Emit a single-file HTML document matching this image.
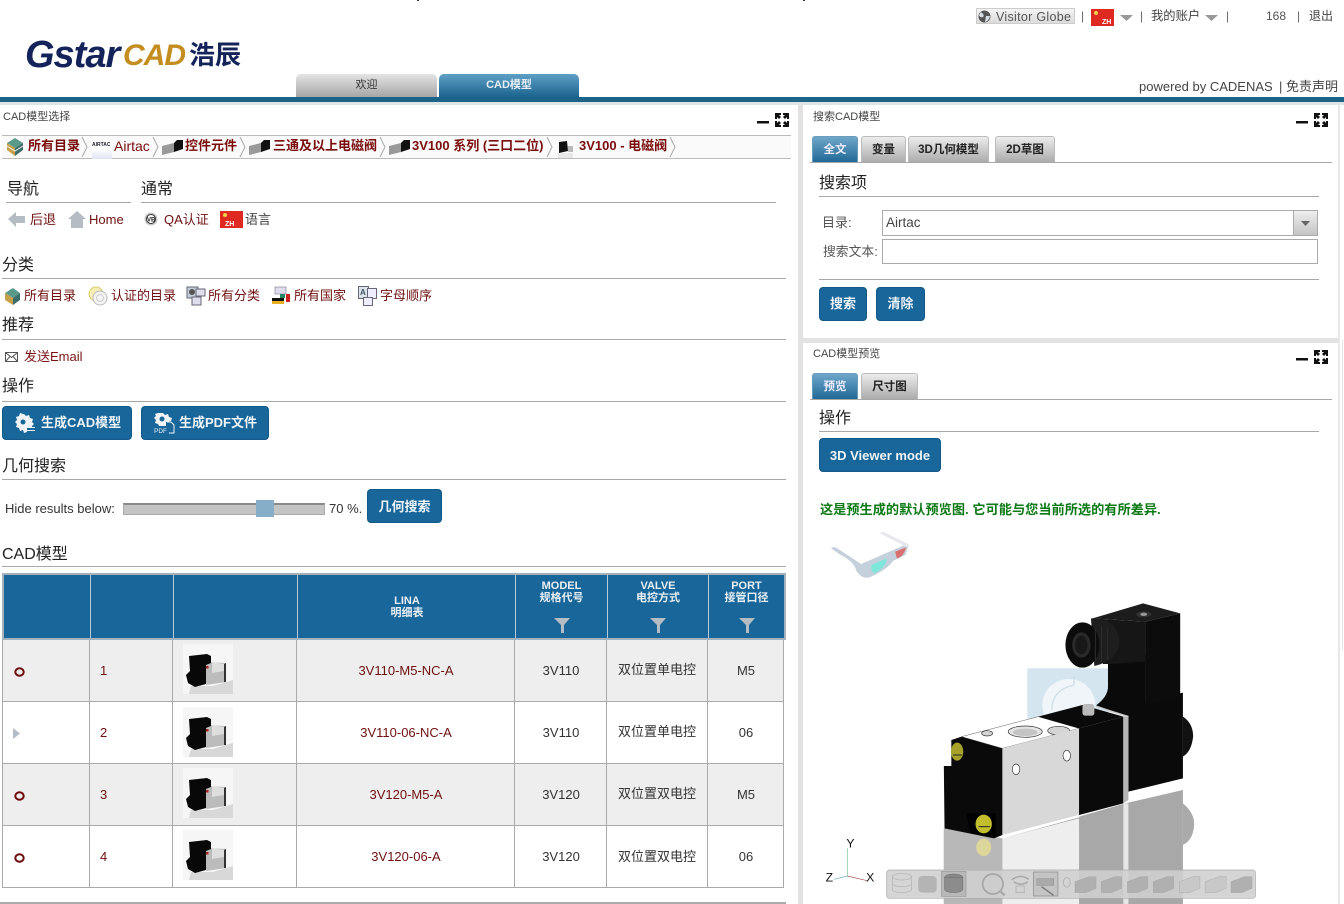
<!DOCTYPE html>
<html lang="zh"><head><meta charset="utf-8"><title>CAD</title>
<style>
html,body{margin:0;padding:0;background:#fff}
#p{position:relative;width:1344px;height:904px;overflow:hidden;background:#fff;font-family:"Liberation Sans","Noto Sans CJK SC",sans-serif;font-size:13px;color:#333}
.a,.t,.h,.l,.b,.c{position:absolute}
.t{white-space:nowrap;line-height:16px;font-size:13px}
.s{font-size:12px}
.h{font-family:"Liberation Sans","WenQuanYi Zen Hei",sans-serif;font-size:16px;color:#222;line-height:20px;white-space:nowrap}
.l{height:1px;background:#a8a8a8}
.r{color:#6e1010}
.bc{color:#7a0c0c;font-weight:bold;font-size:13px}
.b{background:#19669a;border:1px solid #145a88;border-radius:4px;color:#eef4f8;font-weight:bold;font-size:13px;text-align:center;box-sizing:border-box;white-space:nowrap}
.tab{position:absolute;box-sizing:border-box;border-radius:3px 3px 0 0;text-align:center;font-size:11.500px;font-weight:bold;color:#222;line-height:26px;height:27px;background:linear-gradient(#ececec,#a9a9a9);border:1px solid #bbb;border-bottom:0;white-space:nowrap}
.tab.on{background:linear-gradient(#6fa6c9,#1d6695);color:#eef;border-color:#6a9cbd}
.c{font-size:13px;text-align:center;white-space:nowrap;line-height:16px}
.hd{position:absolute;color:#e8f0f5;font-weight:bold;font-size:11px;line-height:12px;text-align:center;white-space:nowrap}
svg{position:absolute;display:block}
</style></head><body><div id="p">

<svg width="0" height="0" style="left:0;top:0"><defs>
<g id="th">
<rect width="50" height="50" fill="#f6f6f6"/>
<path d="M6 50 L8 42 L30 42 L50 36 L50 50Z" fill="#d8d8d8"/>
<path d="M23 18 L43 19 L43 38 L23 41Z" fill="#bcbcbc"/>
<path d="M29 18 L41 20 L41 27 L29 29Z" fill="#dedede"/>
<path d="M41 20 L43 19 L43 38 L41 38Z" fill="#333"/>
<path d="M6 12 L24 10 L28 12 L28 19 L23 21 L23 40 L12 43 L5 39 L3 31 L7 27Z" fill="#080808"/>
<rect x="23" y="22" width="2.500" height="2.500" fill="#a22"/>
</g>
<g id="win">
<rect x="0" y="8" width="12" height="2.500" fill="#111"/>
<g fill="#111">
<path d="M18 0h6v2h-2l2 2-2 2-2-2v2h-2z"/>
<path d="M32 0h-6v2h2l-2 2 2 2 2-2v2h2z"/>
<path d="M18 14h6v-2h-2l2-2-2-2-2 2V8h-2z"/>
<path d="M32 14h-6v-2h2l-2-2 2-2 2 2V8h2z"/>
</g>
</g>
</defs></svg>

<!-- top marks -->
<div class="a" style="left:417px;top:0;width:2px;height:1px;background:#333"></div>
<div class="a" style="left:803px;top:0;width:2px;height:1px;background:#333"></div>

<!-- top right bar -->
<div class="a" style="left:976px;top:8px;width:99px;height:16px;box-sizing:border-box;background:linear-gradient(#f4f4f4,#dcdcdc);border:1px solid #ccc"></div>
<svg style="left:978px;top:10px" width="13" height="13"><circle cx="6.500" cy="6.500" r="6" fill="#555"/><path d="M3 2 Q7 5 5 7 Q2 8 1 5Z M8 6 L12 6 Q11 11 7 12Z" fill="#d8dee4"/></svg>
<div class="t" style="left:996px;top:9px;font-size:12.500px;color:#555;letter-spacing:.3px">Visitor Globe</div>
<div class="t s" style="left:1081px;top:8px;color:#666">|</div>
<svg style="left:1091px;top:9px" width="23" height="17"><rect width="23" height="17" fill="#df2a22"/><circle cx="5" cy="4" r="2" fill="#f6d24a"/><text x="11" y="15" font-size="7" font-weight="bold" fill="#fff" font-family="Liberation Sans">ZH</text></svg>
<svg style="left:1120px;top:14px" width="13" height="8"><path d="M0 1H13L6.500 7Z" fill="#999"/></svg>
<div class="t s" style="left:1140px;top:8px;color:#666">|</div>
<div class="t" style="left:1151px;top:8px;color:#444;font-size:12.300px">我的账户</div>
<svg style="left:1205px;top:14px" width="13" height="8"><path d="M0 1H13L6.500 7Z" fill="#999"/></svg>
<div class="t s" style="left:1226px;top:8px;color:#666">|</div>
<div class="t s" style="left:1266px;top:8px;color:#555">168</div>
<div class="t s" style="left:1297px;top:8px;color:#666">|</div>
<div class="t s" style="left:1309px;top:8px;color:#444">退出</div>

<!-- logo -->
<div class="t" style="left:25px;top:37px;font-size:38px;line-height:36px;font-weight:bold;font-style:italic;color:#14245a;letter-spacing:-1px">Gstar</div>
<div class="t" style="left:123px;top:38px;font-size:30px;line-height:36px;font-weight:bold;font-style:italic;color:#c48d1f;letter-spacing:-1px">CAD</div>
<div class="t" style="left:189px;top:40px;font-size:26px;line-height:30px;font-weight:bold;color:#14245a;font-family:'Liberation Sans','Noto Sans CJK SC',sans-serif">浩辰</div>

<!-- main tabs -->
<div class="a" style="left:296px;top:74px;width:141px;height:23px;border-radius:5px 5px 0 0;background:linear-gradient(#e4e4e4,#a6a6a6);text-align:center;font-size:11px;line-height:23px;color:#333">欢迎</div>
<div class="a" style="left:439px;top:74px;width:140px;height:23px;border-radius:5px 5px 0 0;background:linear-gradient(#5e9fc6,#1b648f);text-align:center;font-size:11px;font-weight:bold;line-height:23px;color:#e6eff5">CAD模型</div>
<div class="t" style="left:1139px;top:79px;color:#444">powered by CADENAS</div>
<div class="t" style="left:1279px;top:79px;color:#444">| 免责声明</div>
<div class="a" style="left:0;top:97px;width:1344px;height:5px;background:#1b6388"></div>
<div class="a" style="left:0;top:102px;width:1344px;height:3px;background:#dfe5e4"></div>

<!-- panel gaps -->
<div class="a" style="left:798px;top:102px;width:5px;height:802px;background:#e2e2e2"></div>
<div class="a" style="left:803px;top:338px;width:535px;height:5px;background:#e2e2e2"></div>
<div class="a" style="left:1338px;top:105px;width:2px;height:799px;background:#e8e8e8"></div>
<div class="a" style="left:1342px;top:340px;width:1px;height:310px;background:#e4e4e4"></div>

<!-- LEFT PANEL -->
<div class="t" style="left:3px;top:109px;font-size:11px;color:#444">CAD模型选择</div>
<svg style="left:757px;top:113px;overflow:visible" width="34" height="14"><use href="#win"/></svg>

<div class="a" style="left:2px;top:135px;width:789px;height:24px;box-sizing:border-box;border:1px solid #bbb;border-width:1px 0;background:#fafafa"></div>
<svg style="left:6px;top:137px" width="18" height="20"><path d="M1 6L9 1L17 6L9 11Z" fill="#5a9a8a"/><path d="M1 6V13L9 19V11Z" fill="#c9a04a"/><path d="M17 6V13L9 19V11Z" fill="#3c6f6a"/><path d="M1 9L9 14L17 9" stroke="#eee" fill="none"/></svg>
<div class="t bc" style="left:28px;top:138px">所有目录</div>
<svg style="left:81px;top:136px" width="8" height="22"><path d="M1 1L6 11L1 21" fill="none" stroke="#aaa"/></svg>
<div class="a" style="left:92px;top:142px;width:20px;height:17px;background:linear-gradient(#fff 40%,#dfe4f2)"></div>
<div class="t" style="left:92px;top:141px;font-size:5px;line-height:8px;font-weight:bold;color:#223">AIRTAC</div>
<div class="t bc" style="left:114px;top:138px;font-weight:normal;font-size:14px">Airtac</div>
<svg style="left:152px;top:136px" width="8" height="22"><path d="M1 1L6 11L1 21" fill="none" stroke="#aaa"/></svg>
<svg style="left:162px;top:139px" width="21" height="16"><path d="M0 7L12 4V13L0 16Z" fill="#999"/><path d="M12 4L15 1H21V10L12 13Z" fill="#111"/></svg>
<div class="t bc" style="left:185px;top:138px">控件元件</div>
<svg style="left:239px;top:136px" width="8" height="22"><path d="M1 1L6 11L1 21" fill="none" stroke="#aaa"/></svg>
<svg style="left:249px;top:139px" width="21" height="16"><path d="M0 7L12 4V13L0 16Z" fill="#999"/><path d="M12 4L15 1H21V10L12 13Z" fill="#111"/></svg>
<div class="t bc" style="left:273px;top:138px">三通及以上电磁阀</div>
<svg style="left:379px;top:136px" width="8" height="22"><path d="M1 1L6 11L1 21" fill="none" stroke="#aaa"/></svg>
<svg style="left:389px;top:139px" width="21" height="16"><path d="M0 7L12 4V13L0 16Z" fill="#999"/><path d="M12 4L15 1H21V10L12 13Z" fill="#111"/></svg>
<div class="t bc" style="left:412px;top:138px">3V100 系列 (三口二位)</div>
<svg style="left:546px;top:136px" width="8" height="22"><path d="M1 1L6 11L1 21" fill="none" stroke="#aaa"/></svg>
<svg style="left:557px;top:141px" width="18" height="17"><path d="M2 1L10 0L11 10L2 12Z" fill="#111"/><path d="M11 5H16V11H11Z" fill="#bbb"/><rect x="1" y="12" width="15" height="5" fill="#e8e8e8"/></svg>
<div class="t bc" style="left:579px;top:138px">3V100 - 电磁阀</div>
<svg style="left:669px;top:136px" width="8" height="22"><path d="M1 1L6 11L1 21" fill="none" stroke="#aaa"/></svg>

<div class="h" style="left:7px;top:180px">导航</div>
<div class="h" style="left:141px;top:180px">通常</div>
<div class="l" style="left:6px;top:202px;width:125px"></div>
<div class="l" style="left:141px;top:202px;width:635px"></div>
<svg style="left:8px;top:211px" width="18" height="17"><path d="M0 8L8 1V5H17V12H8V16Z" fill="#b4bcc4"/></svg>
<div class="t r" style="left:30px;top:212px">后退</div>
<svg style="left:68px;top:211px" width="18" height="17"><path d="M9 0L18 8H15V17H3V8H0Z" fill="#b4bcc4"/></svg>
<div class="t r" style="left:89px;top:212px">Home</div>
<svg style="left:144px;top:212px" width="14" height="14"><circle cx="7" cy="7" r="6.500" fill="#c8c8c8"/><circle cx="7" cy="7" r="4.500" fill="#fff" stroke="#333"/><text x="3" y="9.500" font-size="6" font-weight="bold" fill="#222" font-family="Liberation Sans">VB</text></svg>
<div class="t r" style="left:164px;top:212px">QA认证</div>
<svg style="left:220px;top:211px" width="23" height="17"><rect width="23" height="17" fill="#df2a22"/><circle cx="5" cy="4" r="2" fill="#f6d24a"/><text x="5" y="15" font-size="7" font-weight="bold" fill="#fff" font-family="Liberation Sans">ZH</text></svg>
<div class="t" style="left:245px;top:212px;color:#444">语言</div>

<div class="h" style="left:2px;top:256px">分类</div>
<div class="l" style="left:2px;top:278px;width:784px"></div>
<svg style="left:4px;top:287px" width="17" height="19"><path d="M1 6L9 1L16 6L9 11Z" fill="#5a9a8a"/><path d="M1 6V13L9 18V11Z" fill="#c9a04a"/><path d="M16 6V13L9 18V11Z" fill="#3c6f6a"/></svg>
<div class="t r" style="left:24px;top:288px">所有目录</div>
<svg style="left:88px;top:286px" width="20" height="20"><circle cx="8" cy="8" r="7" fill="#f5efb5" stroke="#d8cf70"/><circle cx="12" cy="12" r="7" fill="#f4f4f4" stroke="#bbb"/><circle cx="12" cy="12" r="3.500" fill="none" stroke="#ccc"/></svg>
<div class="t r" style="left:111px;top:288px">认证的目录</div>
<svg style="left:186px;top:286px" width="20" height="20"><rect x="1" y="1" width="11" height="11" fill="#c2ced8" stroke="#667"/><rect x="10" y="3" width="9" height="7" fill="#dde" stroke="#667"/><rect x="6" y="11" width="9" height="8" fill="#dde" stroke="#667"/><circle cx="6" cy="6" r="3" fill="#555"/></svg>
<div class="t r" style="left:208px;top:288px">所有分类</div>
<svg style="left:272px;top:286px" width="19" height="19"><rect x="3" y="1" width="11" height="7" fill="#dde" stroke="#667" stroke-width=".5"/><rect x="0" y="12" width="12" height="3" fill="#111"/><rect x="0" y="15" width="12" height="3" fill="#e8b020"/><rect x="14" y="8" width="4" height="8" fill="#c22"/><rect x="8" y="8" width="5" height="4" fill="#286"/></svg>
<div class="t r" style="left:294px;top:288px">所有国家</div>
<svg style="left:358px;top:286px" width="19" height="20"><rect x=".5" y=".5" width="10" height="12" fill="#dbe4ea" stroke="#667"/><rect x="9.500" y="2.500" width="9" height="10" fill="#eef" stroke="#667"/><rect x="5.500" y="11.500" width="9" height="8" fill="#eef" stroke="#667"/><text x="2" y="9" font-size="8" font-weight="bold" fill="#456" font-family="Liberation Sans">A</text></svg>
<div class="t r" style="left:380px;top:288px">字母顺序</div>

<div class="h" style="left:2px;top:316px">推荐</div>
<div class="l" style="left:2px;top:339px;width:784px"></div>
<svg style="left:5px;top:352px" width="13" height="10"><rect x=".5" y=".5" width="12" height="9" fill="#fff" stroke="#555"/><path d="M.5 .5L6.500 5.500L12.500 .5M.5 9.500L5 4.500M12.500 9.500L8 4.500" fill="none" stroke="#555"/></svg>
<div class="t r" style="left:24px;top:349px;color:#7a1515">发送Email</div>

<div class="h" style="left:2px;top:377px">操作</div>
<div class="l" style="left:2px;top:401px;width:784px"></div>
<div class="b" style="left:2px;top:406px;width:130px;height:34px;line-height:31px;text-align:left;padding-left:38px">生成CAD模型</div>
<svg style="left:15px;top:413px" width="21" height="21"><path d="M9 1l2 2 3-1 1 3 3 1-1 3 2 2-2 2v2H12v4l-3 1-1-3-3 1-1-3-3-1 1-3-2-2 2-2-1-3 3-1 1-3 3 1z" fill="#f0f4f8"/><circle cx="8" cy="9" r="2.500" fill="#19669a"/><path d="M12 14h8v1h-8zM12 17h8v1h-8z" fill="#f0f4f8"/></svg>
<div class="b" style="left:141px;top:406px;width:128px;height:34px;line-height:31px;text-align:left;padding-left:37px">生成PDF文件</div>
<svg style="left:154px;top:413px" width="21" height="21"><path d="M9 0l2 2 3-1 1 3 3 1-1 3-5 1v4H5L4 11 1 10l1-3-2-2 2-2-1-2 3-1 1-2 3 1z" fill="#f0f4f8"/><circle cx="8" cy="6" r="2.500" fill="#19669a"/><path d="M13 9h4l3 3v8h-5" fill="none" stroke="#f0f4f8"/><text x="0" y="20" font-size="6.500" font-family="Liberation Sans" fill="#f0f4f8">PDF</text></svg>

<div class="h" style="left:2px;top:457px">几何搜索</div>
<div class="l" style="left:2px;top:479px;width:784px"></div>
<div class="t" style="left:5px;top:501px;color:#333">Hide results below:</div>
<div class="a" style="left:123px;top:503px;width:202px;height:12px;box-sizing:border-box;background:#c4c4c4;border:1px solid #aaa;border-top:2px solid #8a8a8a"></div>
<div class="a" style="left:256px;top:500px;width:18px;height:17px;background:#86aec8"></div>
<div class="t" style="left:329px;top:501px;color:#333">70 %.</div>
<div class="b" style="left:367px;top:489px;width:75px;height:34px;line-height:33px;font-size:13px">几何搜索</div>

<div class="h" style="left:2px;top:545px">CAD模型</div>
<div class="l" style="left:2px;top:566px;width:784px"></div>

<!-- table -->
<div class="a" style="left:2px;top:573px;width:784px;height:67px;box-sizing:border-box;background:#19669a;border:2px solid #a3b3be"></div>
<div class="a" style="left:90px;top:575px;width:1px;height:63px;background:#b9cbd7"></div>
<div class="a" style="left:173px;top:575px;width:1px;height:63px;background:#b9cbd7"></div>
<div class="a" style="left:297px;top:575px;width:1px;height:63px;background:#b9cbd7"></div>
<div class="a" style="left:515px;top:575px;width:1px;height:63px;background:#b9cbd7"></div>
<div class="a" style="left:607px;top:575px;width:1px;height:63px;background:#b9cbd7"></div>
<div class="a" style="left:708px;top:575px;width:1px;height:63px;background:#b9cbd7"></div>
<div class="hd" style="left:297px;top:595px;width:220px">LINA<br>明细表</div>
<div class="hd" style="left:516px;top:580px;width:91px">MODEL<br>规格代号</div>
<div class="hd" style="left:608px;top:580px;width:100px">VALVE<br>电控方式</div>
<div class="hd" style="left:709px;top:580px;width:75px">PORT<br>接管口径</div>
<svg style="left:554px;top:618px" width="16" height="15"><path d="M0 0H16L10 7V15L7 15V7Z" fill="#b4bcc4"/></svg>
<svg style="left:650px;top:618px" width="16" height="15"><path d="M0 0H16L10 7V15L7 15V7Z" fill="#b4bcc4"/></svg>
<svg style="left:739px;top:618px" width="16" height="15"><path d="M0 0H16L10 7V15L7 15V7Z" fill="#b4bcc4"/></svg>

<div class="a" style="left:2px;top:640px;width:782px;height:62px;background:#eeeeee"></div>
<div class="a" style="left:2px;top:764px;width:782px;height:62px;background:#eeeeee"></div>
<div class="a" style="left:2px;top:701px;width:782px;height:1px;background:#aaa"></div>
<div class="a" style="left:2px;top:763px;width:782px;height:1px;background:#aaa"></div>
<div class="a" style="left:2px;top:825px;width:782px;height:1px;background:#aaa"></div>
<div class="a" style="left:2px;top:887px;width:782px;height:1px;background:#aaa"></div>
<div class="a" style="left:2px;top:640px;width:1px;height:248px;background:#aaa"></div>
<div class="a" style="left:89px;top:640px;width:1px;height:248px;background:#aaa"></div>
<div class="a" style="left:172px;top:640px;width:1px;height:248px;background:#aaa"></div>
<div class="a" style="left:296px;top:640px;width:1px;height:248px;background:#aaa"></div>
<div class="a" style="left:514px;top:640px;width:1px;height:248px;background:#aaa"></div>
<div class="a" style="left:606px;top:640px;width:1px;height:248px;background:#aaa"></div>
<div class="a" style="left:707px;top:640px;width:1px;height:248px;background:#aaa"></div>
<div class="a" style="left:783px;top:640px;width:1px;height:248px;background:#aaa"></div>
<div class="a" style="left:0;top:902px;width:786px;height:2px;background:#aaa"></div>

<svg style="left:14px;top:667px" width="11" height="10"><ellipse cx="5.500" cy="5" rx="4.200" ry="3.700" fill="none" stroke="#6e0a0a" stroke-width="2"/></svg>
<svg style="left:13px;top:728px" width="7" height="11"><path d="M0 0L7 5.500L0 11Z" fill="#b4bcc8"/></svg>
<svg style="left:14px;top:791px" width="11" height="10"><ellipse cx="5.500" cy="5" rx="4.200" ry="3.700" fill="none" stroke="#6e0a0a" stroke-width="2"/></svg>
<svg style="left:14px;top:853px" width="11" height="10"><ellipse cx="5.500" cy="5" rx="4.200" ry="3.700" fill="none" stroke="#6e0a0a" stroke-width="2"/></svg>

<div class="t r" style="left:100px;top:663px">1</div>
<div class="t r" style="left:100px;top:725px">2</div>
<div class="t r" style="left:100px;top:787px">3</div>
<div class="t r" style="left:100px;top:849px">4</div>

<svg style="left:183px;top:644px" width="50" height="50"><use href="#th"/></svg>
<svg style="left:183px;top:707px" width="50" height="50"><use href="#th"/></svg>
<svg style="left:183px;top:768px" width="50" height="50"><use href="#th"/></svg>
<svg style="left:183px;top:830px" width="50" height="50"><use href="#th"/></svg>

<div class="c r" style="left:297px;top:663px;width:218px">3V110-M5-NC-A</div>
<div class="c r" style="left:297px;top:725px;width:218px">3V110-06-NC-A</div>
<div class="c r" style="left:297px;top:787px;width:218px">3V120-M5-A</div>
<div class="c r" style="left:297px;top:849px;width:218px">3V120-06-A</div>
<div class="c" style="left:515px;top:663px;width:92px">3V110</div>
<div class="c" style="left:515px;top:725px;width:92px">3V110</div>
<div class="c" style="left:515px;top:787px;width:92px">3V120</div>
<div class="c" style="left:515px;top:849px;width:92px">3V120</div>
<div class="c" style="left:607px;top:662px;width:100px">双位置单电控</div>
<div class="c" style="left:607px;top:724px;width:100px">双位置单电控</div>
<div class="c" style="left:607px;top:786px;width:100px">双位置双电控</div>
<div class="c" style="left:607px;top:849px;width:100px">双位置双电控</div>
<div class="c" style="left:708px;top:663px;width:76px">M5</div>
<div class="c" style="left:708px;top:725px;width:76px">06</div>
<div class="c" style="left:708px;top:787px;width:76px">M5</div>
<div class="c" style="left:708px;top:849px;width:76px">06</div>

<!-- RIGHT TOP PANEL -->
<div class="t" style="left:813px;top:109px;font-size:11px;color:#444">搜索CAD模型</div>
<svg style="left:1296px;top:113px;overflow:visible" width="34" height="14"><use href="#win"/></svg>
<div class="tab on" style="left:812px;top:136px;width:46px">全文</div>
<div class="tab" style="left:861px;top:136px;width:45px">变量</div>
<div class="tab" style="left:908px;top:136px;width:81px">3D几何模型</div>
<div class="tab" style="left:995px;top:136px;width:60px">2D草图</div>
<div class="l" style="left:810px;top:162px;width:522px"></div>
<div class="h" style="left:819px;top:174px">搜索项</div>
<div class="l" style="left:819px;top:196px;width:500px"></div>
<div class="t" style="left:822px;top:215px;color:#555">目录:</div>
<div class="a" style="left:882px;top:210px;width:436px;height:26px;box-sizing:border-box;border:1px solid #aaa;background:#fff;font-size:13.500px;line-height:23px;padding-left:3px;color:#444">Airtac</div>
<div class="a" style="left:1293px;top:211px;width:24px;height:24px;box-sizing:border-box;background:linear-gradient(#eee,#c4c4c4);border-left:1px solid #aaa"></div>
<svg style="left:1301px;top:221px" width="9" height="5"><path d="M0 0H9L4.500 5Z" fill="#666"/></svg>
<div class="t" style="left:823px;top:244px;color:#555;font-size:12.800px">搜索文本:</div>
<div class="a" style="left:882px;top:239px;width:436px;height:25px;box-sizing:border-box;border:1px solid #aaa;background:#fff"></div>
<div class="l" style="left:819px;top:279px;width:500px"></div>
<div class="b" style="left:819px;top:287px;width:48px;height:34px;line-height:31px">搜索</div>
<div class="b" style="left:876px;top:287px;width:49px;height:34px;line-height:31px">清除</div>

<!-- RIGHT BOTTOM PANEL -->
<div class="t" style="left:813px;top:346px;font-size:11px;color:#444">CAD模型预览</div>
<svg style="left:1296px;top:350px;overflow:visible" width="34" height="14"><use href="#win"/></svg>
<div class="tab on" style="left:812px;top:373px;width:46px">预览</div>
<div class="tab" style="left:861px;top:373px;width:57px">尺寸图</div>
<div class="l" style="left:810px;top:399px;width:522px"></div>
<div class="h" style="left:819px;top:409px">操作</div>
<div class="l" style="left:819px;top:431px;width:500px"></div>
<div class="b" style="left:819px;top:438px;width:122px;height:34px;line-height:33px;font-size:13px">3D Viewer mode</div>
<div class="t" style="left:820px;top:502px;font-size:13.200px;font-weight:bold;color:#0d7a16">这是预生成的默认预览图. 它可能与您当前所选的有所差异.</div>

<!-- 3D view -->
<svg style="left:810px;top:520px" width="534" height="384" viewBox="0 0 1568 1152" preserveAspectRatio="none">
<path d="M62 85 Q70 78 80 85 L150 132 L285 72 L290 75 L280 105 L245 122 Q225 150 175 172 Q150 178 135 150 Q130 125 90 105 Z" fill="#c4d0dc"/>
<path d="M205 40 L215 35 L290 72 L285 82 Z" fill="#e6eaee"/>
<path d="M180 135 L225 115 Q225 140 190 160 Q178 155 180 135Z" fill="#7fe6dc"/>
<path d="M250 95 L282 82 Q275 110 255 115 Z" fill="#d97070"/>

<path d="M393 925 L565 955 L790 890 L925 850 L1095 810 L1095 1152 L393 1152Z" fill="#a8a8a8"/>
<path d="M393 925 L565 955 V1152 H393Z" fill="#b8b8b8"/>
<path d="M565 955 L790 895 V1152 H565Z" fill="#eeeeee"/>
<path d="M920 850 L935 850 V1152 H920Z" fill="#e6e6e6"/>
<ellipse cx="510" cy="982" rx="22" ry="26" fill="#ddd69a"/>
<path d="M1095 850 Q1130 880 1128 915 Q1125 960 1095 975Z" fill="#aaa"/>

<rect x="638" y="445" width="237" height="150" fill="#d5e5ef"/>
<circle cx="760" cy="555" r="78" fill="#eff5f8"/>
<path d="M775 495 V470 M775 495 Q710 510 710 570" fill="none" stroke="#cfdfe9" stroke-width="4"/>

<!-- elbow + right block -->
<path d="M875 420 L985 400 V545 L1095 518 V775 L935 815 V590 L840 556 Q875 530 875 500Z" fill="#0a0a0a"/>
<path d="M985 305 L1087 280 V530 L985 555Z" fill="#0c0c0c"/>
<path d="M830 295 L978 250 L1087 280 L985 305Z" fill="#1c1c1c"/>
<ellipse cx="980" cy="283" rx="22" ry="9" fill="#333"/>
<ellipse cx="980" cy="283" rx="10" ry="5" fill="#999"/>
<!-- neck -->
<path d="M830 295 L985 305 V425 L880 432 L860 432Z" fill="#161616"/>
<path d="M825 295 Q905 295 908 365 Q908 420 835 438Z" fill="#1e1e1e"/>
<!-- knob -->
<ellipse cx="800" cy="375" rx="50" ry="68" fill="#0c0c0c"/>
<ellipse cx="797" cy="375" rx="27" ry="38" fill="#2a2a2a"/>
<ellipse cx="797" cy="375" rx="18" ry="28" fill="#181818"/>
<path d="M838 325 V425 M856 318 V426 M874 325 V420" stroke="#2c2c2c" stroke-width="3"/>
<path d="M1095 590 Q1125 610 1125 650 Q1120 695 1095 710Z" fill="#111"/>

<path d="M415 660 L445 650 L565 685 L565 945 L540 955 L395 925 L393 738 L415 738Z" fill="#0a0a0a"/>
<path d="M445 650 L670 590 L790 625 L565 685Z" fill="#fff" stroke="#111"/>
<ellipse cx="632" cy="635" rx="50" ry="17" fill="#e4e4e4" stroke="#333" stroke-width="2"/>
<ellipse cx="632" cy="637" rx="36" ry="11" fill="#c4c4c4"/>
<ellipse cx="730" cy="632" rx="32" ry="13" fill="#d4d4d4" stroke="#333" stroke-width="2"/>
<ellipse cx="520" cy="640" rx="16" ry="8" fill="#d4d4d4" stroke="#333" stroke-width="2"/>
<path d="M565 685 L790 625 V885 L565 945Z" fill="#d8d8d8"/>
<ellipse cx="605" cy="748" rx="11" ry="16" fill="#fff" stroke="#333" stroke-width="2"/>
<ellipse cx="754" cy="707" rx="11" ry="16" fill="#fff" stroke="#333" stroke-width="2"/>
<path d="M670 590 L800 555 L920 590 L790 625Z" fill="#0a0a0a"/>
<path d="M790 625 L920 590 V850 L790 885Z" fill="#0a0a0a"/>
<path d="M920 590 L935 588 V840 L920 850Z" fill="#b4b4b4"/>
<path d="M840 560 L935 590" stroke="#ccc" stroke-width="5"/>
<rect x="800" y="552" width="35" height="35" rx="8" fill="#bbb"/>
<ellipse cx="432" cy="695" rx="18" ry="27" fill="#a6a12a"/>
<path d="M420 705 H446" stroke="#222" stroke-width="3"/>
<path d="M460 880 L545 880 V950 L470 940Z" fill="#000"/>
<ellipse cx="510" cy="912" rx="24" ry="28" fill="#c2bd2c"/>
<path d="M495 920 H528" stroke="#222" stroke-width="3"/>
<path d="M565 945 L790 885 V892 L565 955Z" fill="#fff"/>

<path d="M110 985 V1068" stroke="#7ac58a" stroke-width="2"/>
<path d="M110 1068 L168 1082" stroke="#a25a5a" stroke-width="2"/>
<path d="M110 1068 L70 1078" stroke="#6ab0cc" stroke-width="2"/>
<text x="107" y="982" font-size="36" font-family="Liberation Sans" fill="#111">Y</text>
<text x="46" y="1085" font-size="36" font-family="Liberation Sans" fill="#111">Z</text>
<text x="165" y="1085" font-size="36" font-family="Liberation Sans" fill="#111">X</text>

<rect x="225" y="1050" width="1083" height="85" rx="8" fill="#cfcfcf" fill-opacity=".88" stroke="#aaa" stroke-width="2"/>
<ellipse cx="270" cy="1070" rx="28" ry="10" fill="none" stroke="#b4b4b4" stroke-width="2"/><path d="M242 1070 V1108 A28 10 0 0 0 298 1108 V1070 M242 1090 A28 10 0 0 0 298 1090" fill="none" stroke="#b4b4b4" stroke-width="2"/>
<rect x="318" y="1068" width="54" height="50" rx="12" fill="#b4b4b4"/>
<rect x="386" y="1054" width="72" height="75" fill="#b8b8b8" stroke="#999" stroke-width="2"/>
<ellipse cx="422" cy="1072" rx="27" ry="10" fill="#888" stroke="#555"/><path d="M395 1072 V1108 A27 10 0 0 0 449 1108 V1072Z" fill="#8c8c8c" stroke="#555"/>
<circle cx="537" cy="1092" r="30" fill="none" stroke="#a6a6a6" stroke-width="5"/>
<path d="M560 1115 L572 1126" stroke="#a6a6a6" stroke-width="6"/>
<path d="M592 1080 Q615 1060 642 1078 M598 1085 Q620 1100 640 1085" fill="none" stroke="#a6a6a6" stroke-width="4"/>
<rect x="605" y="1098" width="24" height="20" fill="none" stroke="#aaa" stroke-width="2"/>
<rect x="656" y="1056" width="72" height="72" fill="#c4c4c4" stroke="#888" stroke-width="2"/>
<rect x="666" y="1076" width="50" height="20" fill="#aaa" stroke="#777"/>
<path d="M680 1100 L715 1126" stroke="#777" stroke-width="4"/>
<ellipse cx="754" cy="1087" rx="10" ry="15" fill="none" stroke="#aaa" stroke-width="2"/>
<g fill="#b0b0b0" stroke="#a0a0a0"><path d="M778 1085 L820 1070 H840 V1105 L810 1118 H778Z"/><path d="M855 1085 L895 1070 H915 V1105 L885 1118 H855Z"/><path d="M932 1085 L972 1070 H992 V1105 L962 1118 H932Z"/><path d="M1008 1085 L1048 1070 H1068 V1105 L1038 1118 H1008Z"/><path d="M1085 1085 L1125 1070 H1145 V1105 L1115 1118 H1085Z" fill="#c8c8c8"/><path d="M1160 1085 L1200 1070 H1222 V1105 L1192 1118 H1160Z" fill="#c8c8c8"/><path d="M1236 1085 L1276 1070 H1298 V1105 L1268 1118 H1236Z"/></g>
</svg>
</div></body></html>
